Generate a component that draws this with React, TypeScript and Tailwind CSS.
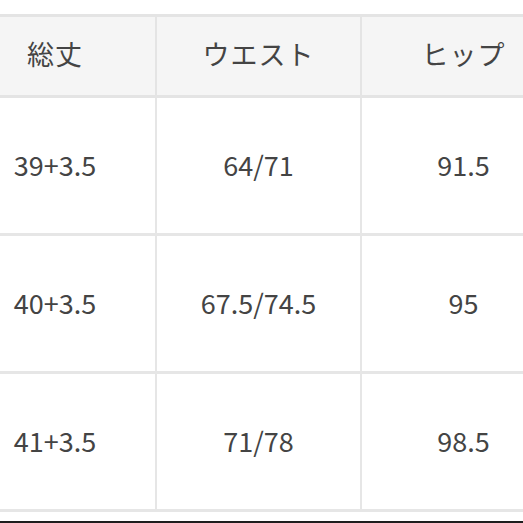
const headers = ["総丈", "ウエスト", "ヒップ"]

const rows = [
  ["39+3.5", "64/71", "91.5"],
  ["40+3.5", "67.5/74.5", "95"],
  ["41+3.5", "71/78", "98.5"],
]

export default function App() {
  return (
    <div
      className="w-[523px] h-[523px] overflow-hidden bg-white flex flex-col text-[#444444]"
      style={{ fontFamily: '"Noto Sans CJK JP", "Noto Sans", sans-serif' }}
    >
      <div className="h-[14px] shrink-0" />
      <div className="ml-[-45px] w-[620px] border-t-[3px] border-[#e4e4e4]">
        <div className="grid grid-cols-[202px_205px_205px] h-[81px] bg-[#f5f5f5] border-b-[3px] border-[#e4e4e4]">
          {headers.map((h) => (
            <div
              key={h}
              className="flex items-center justify-center border-r-[2px] border-[#e4e4e4] text-[27px] tracking-[1px] pb-[3px]"
            >
              {h}
            </div>
          ))}
        </div>
        {rows.map((r, i) => (
          <div
            key={i}
            className="grid grid-cols-[202px_205px_205px] h-[138px] border-b-[3px] border-[#e6e6e6]"
          >
            {r.map((v, j) => (
              <div
                key={j}
                className="flex items-center justify-center border-r-[2px] border-[#e6e6e6] text-[27px] pb-[1px]"
              >
                {v}
              </div>
            ))}
          </div>
        ))}
      </div>
      <div className="flex-1" />
      <div className="h-[2px] bg-[#1e1e1e] shrink-0" />
    </div>
  )
}
